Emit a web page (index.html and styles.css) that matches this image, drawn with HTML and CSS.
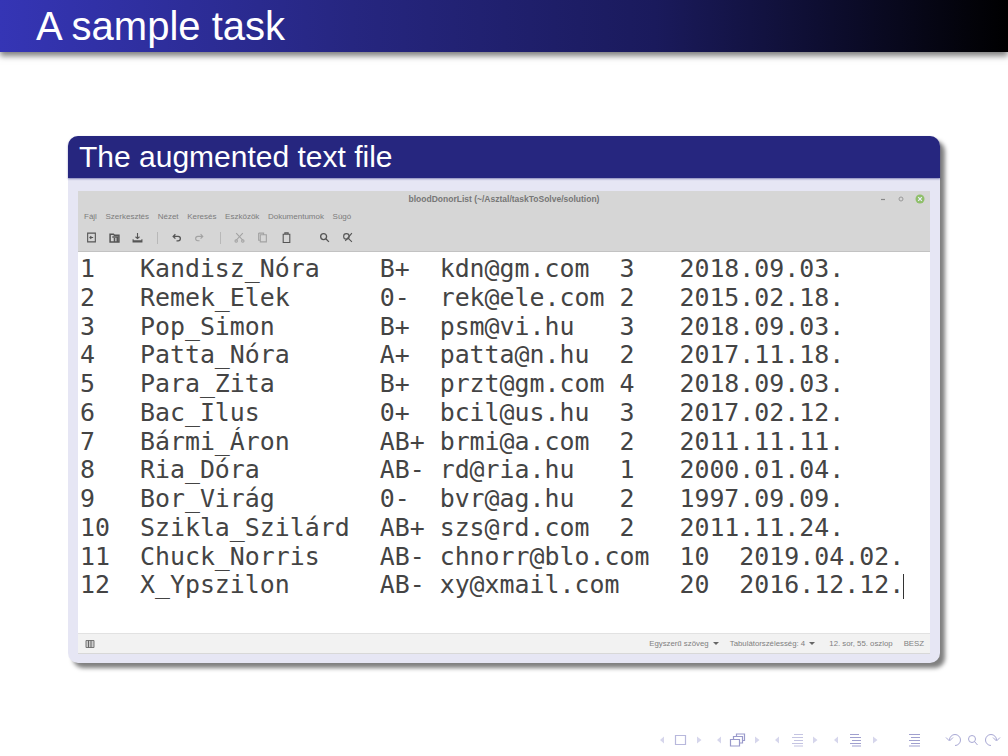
FILE: index.html
```html
<!DOCTYPE html>
<html lang="en">
<head>
    <meta charset="UTF-8">
    <title>A sample task</title>
    <link rel="stylesheet" href="styles.css">
</head>
<body>
    <div class="slide">
        <header class="frame-title">A sample task</header>

        <section class="block">
            <h2 class="block-title">The augmented text file</h2>
            <div class="block-body">
                <div class="window">
                    <div class="titlebar">
                        <span class="window-name">bloodDonorList (~/Asztal/taskToSolve/solution)</span>
                        <span class="window-btns">
                            <svg width="8" height="8" viewBox="0 0 8 8"><path d="M2 4.5h4" stroke="#888" stroke-width="1.2"/></svg>
                            <svg width="8" height="8" viewBox="0 0 8 8"><circle cx="4" cy="4" r="2" fill="none" stroke="#999" stroke-width="1"/></svg>
                            <svg width="10" height="10" viewBox="0 0 10 10"><circle cx="5" cy="5" r="4.5" fill="#8fbf6a"/><path d="M3.2 3.2l3.6 3.6M6.8 3.2l-3.6 3.6" stroke="#eef" stroke-width="1.2"/></svg>
                        </span>
                    </div>
                    <nav class="menubar">
                        <span>Fájl</span><span>Szerkesztés</span><span>Nézet</span><span>Keresés</span><span>Eszközök</span><span>Dokumentumok</span><span>Súgó</span>
                    </nav>
                    <div class="toolbar">
                        <svg class="tool" viewBox="0 0 10 10"><path d="M1.5 1h7v8h-7zM6.5 5H3.5M4.8 3.7L3.5 5l1.3 1.3"/></svg>
                        <svg class="tool tool-open" viewBox="0 0 10 10"><path d="M1 9V2h3l1 1h4v6zM3 4.5h4.5V9M5 5.5V9"/></svg>
                        <svg class="tool tool-save" viewBox="0 0 10 10"><path d="M5 1v5M3.2 4.3L5 6l1.8-1.7M1 6.5v2.5h8V6.5M1 8h8"/></svg>
                        <i class="tool-sep"></i>
                        <svg class="tool tool-undo" viewBox="0 0 10 10"><path d="M2 4h4.5a2 2 0 0 1 0 4H5M4 2L2 4l2 2"/></svg>
                        <svg class="tool tool-redo" viewBox="0 0 10 10"><path d="M8 4H3.500a2 2 0 0 0 0 4H5M6 2l2 2-2 2"/></svg>
                        <i class="tool-sep tool-sep-2"></i>
                        <svg class="tool tool-cut" viewBox="0 0 10 10"><path d="M2 1l6 6.5M8 1L2 7.5"/><circle cx="2" cy="8.2" r="1.1"/><circle cx="8" cy="8.2" r="1.1"/></svg>
                        <svg class="tool tool-copy" viewBox="0 0 10 10"><path d="M1.5 1h4.5v1.5M3 2.5h5.5V9H3zM1.5 1v6.5H3"/></svg>
                        <svg class="tool tool-paste" viewBox="0 0 10 10"><path d="M2 2h6v7.500H2zM3.500 2V.8h3V2"/></svg>
                        <svg class="tool tool-find" viewBox="0 0 10 10"><circle cx="4.200" cy="4.200" r="2.700"/><path d="M6.200 6.200L9 9"/></svg>
                        <svg class="tool tool-clear" viewBox="0 0 10 10"><circle cx="4" cy="4" r="2.500"/><path d="M5.800 5.800L9 9M9 1L3 8"/></svg>
                    </div>
                    <pre class="editor">1   Kandisz_Nóra    B+  kdn@gm.com  3   2018.09.03.
2   Remek_Elek      0-  rek@ele.com 2   2015.02.18.
3   Pop_Simon       B+  psm@vi.hu   3   2018.09.03.
4   Patta_Nóra      A+  patta@n.hu  2   2017.11.18.
5   Para_Zita       B+  przt@gm.com 4   2018.09.03.
6   Bac_Ilus        0+  bcil@us.hu  3   2017.02.12.
7   Bármi_Áron      AB+ brmi@a.com  2   2011.11.11.
8   Ria_Dóra        AB- rd@ria.hu   1   2000.01.04.
9   Bor_Virág       0-  bvr@ag.hu   2   1997.09.09.
10  Szikla_Szilárd  AB+ szs@rd.com  2   2011.11.24.
11  Chuck_Norris    AB- chnorr@blo.com  10  2019.04.02.
12  X_Ypszilon      AB- xy@xmail.com    20  2016.12.12.<span class="caret"></span></pre>
                    <div class="statusbar">
                        <svg class="panel-toggle" width="10" height="8" viewBox="0 0 10 8"><path d="M1 .5h8v7H1z" fill="#ccc" stroke="#777"/><path d="M3.500 .5v7M6 .5v7" stroke="#666"/></svg>
                        <span class="status-items">
                            <span>Egyszerű szöveg <b class="drop"></b></span>
                            <span>Tabulátorszélesség: 4 <b class="drop"></b></span>
                            <span>12. sor, 55. oszlop</span>
                            <span>BESZ</span>
                        </span>
                    </div>
                </div>
            </div>
        </section>

        <footer class="beamer-nav">
            <svg width="348" height="20" viewBox="0 0 348 20">
                <g class="nav-tri">
                    <path d="M4 6.500v7L0 10zM37 6.500v7l4.500-3.500zM61 6.500v7L57 10zM95 6.500v7l4.500-3.500zM119 6.500v7L115 10zM153 6.500v7l4.500-3.500zM178 6.500v7L174 10zM213 6.500v7l4.500-3.500z"/>
                </g>
                <g class="nav-line">
                    <path d="M15.500 5.500h10v9h-10z"/>
                    <path d="M70.500 9.500h9v6.500h-9zM73.500 9.500V6.500h9v6.500h-3M76.500 6.500V4h8v6.500h-2"/>
                </g>
                <g class="nav-list">
                    <path d="M134 4.500h9M132 7.500h11M134 10.500h9M132 13.500h11M134 16h9"/>
                    <path class="nav-dark" d="M190 4.500h9M190 7.500h11M192 10.500h9M190 13.500h11M192 16h9"/>
                    <path class="nav-dark" d="M249 4.500h11M251 7.500h9M249 10.500h11M251 13.500h9M249 16h11"/>
                </g>
                <g class="nav-loop">
                    <path d="M289.500 10a5.500 5.500 0 1 1 5.500 5.500M286 7.500l3.500 3.500 3.500-3.500"/>
                    <circle cx="312" cy="9" r="3.500"/>
                    <path d="M314.500 11.500l3 3.500"/>
                    <path d="M336.500 10a5.500 5.500 0 1 0-5.500 5.500M333 7.500l3.500 3.500 3.500-3.500"/>
                </g>
            </svg>
        </footer>
    </div>
</body>
</html>
```

FILE: styles.css
```css
html, body {
    margin: 0;
    padding: 0;
}

body {
    font-family: 'Liberation Sans', Arial, sans-serif;
    background-color: #ffffff;
}

.slide {
    width: 1008px;
    height: 756px;
    overflow: hidden;
    display: flex;
    flex-direction: column;
}

.frame-title {
    height: 52px;
    flex-shrink: 0;
    box-sizing: border-box;
    padding-left: 36px;
    line-height: 52px;
    font-size: 40px;
    color: #ffffff;
    background: linear-gradient(to right, #3535b5 0%, #262680 35%, #1a1a5c 65%, #000000 100%);
    box-shadow: 0 4px 6px rgba(0, 0, 0, 0.5);
}

.block {
    width: 872px;
    margin: 84px 0 0 68px;
    border-radius: 10px;
    box-shadow: 5px 5px 4px rgba(0, 0, 0, 0.5);
    background-color: #e6e6f4;
}

.block-title {
    margin: 0;
    height: 42px;
    box-sizing: border-box;
    padding-left: 11px;
    font-size: 30px;
    font-weight: 400;
    line-height: 42px;
    color: #ffffff;
    background-color: #26267f;
    border-radius: 10px 10px 0 0;
    box-shadow: 0 1px 2px rgba(38, 38, 127, 0.5);
}

.block-body {
    padding: 13px 10px 9px;
    border-radius: 0 0 10px 10px;
}

.window {
    background-color: #ffffff;
    display: flex;
    flex-direction: column;
}

.titlebar {
    height: 18px;
    background-color: #d6d6d6;
    position: relative;
    text-align: center;
}

.window-name {
    font-size: 8.5px;
    font-weight: 700;
    line-height: 16px;
    color: #777777;
    display: block;
}

.window-btns {
    position: absolute;
    right: 5px;
    top: 3px;
    display: flex;
    align-items: center;
    gap: 10px;
}

.menubar {
    height: 15px;
    padding-left: 6px;
    display: flex;
    gap: 8.6px;
    align-items: center;
    background-color: #d6d6d6;
    font-size: 8px;
    color: #7c7c7c;
}

.toolbar {
    height: 28px;
    display: flex;
    align-items: center;
    padding-left: 8px;
    background-color: #d6d6d6;
    border-bottom: 1px solid #c2c2c2;
    box-sizing: border-box;
}

.tool {
    width: 11px;
    height: 11px;
    margin-right: 12px;
    fill: none;
    stroke: #555555;
    stroke-width: 1;
}

.tool-open {
    stroke-width: 1.4;
}

.tool-undo,
.tool-find {
    stroke-width: 1.2;
}

.tool-redo,
.tool-cut,
.tool-copy {
    stroke: #a2a2a2;
}

.tool-save {
    margin-right: 14px;
}

.tool-sep {
    width: 1px;
    height: 12px;
    background-color: #b8b8b8;
    margin-right: 13px;
}

.tool-redo {
    margin-right: 15px;
}

.tool-sep-2 {
    margin-right: 13px;
}

.tool-copy {
    margin-right: 13px;
}

.tool-paste {
    margin-right: 27px;
}

.editor {
    margin: 0;
    height: 381px;
    box-sizing: border-box;
    padding: 3px 0 0 2px;
    font-family: 'DejaVu Sans Mono', 'Liberation Mono', monospace;
    font-size: 24.9px;
    line-height: 28.75px;
    color: #444444;
    background-color: #ffffff;
}

.caret {
    display: inline-block;
    width: 1px;
    height: 25px;
    margin-left: -1px;
    vertical-align: -6px;
    background-color: #333333;
}

.statusbar {
    height: 21px;
    box-sizing: border-box;
    padding: 0 6px 0 7px;
    display: flex;
    justify-content: space-between;
    align-items: center;
    background-color: #f2f2f2;
    border-top: 1px solid #e2e2e2;
    border-bottom: 1px solid #d8d8d8;
    font-size: 7.8px;
    color: #808080;
}

.status-items {
    display: flex;
    gap: 11px;
}

.status-items span:nth-child(3) {
    margin-left: 3px;
}

.drop {
    display: inline-block;
    margin-left: 2px;
    vertical-align: 1px;
    border-left: 3px solid transparent;
    border-right: 3px solid transparent;
    border-top: 3px solid #666666;
}

.beamer-nav {
    margin: 67px 0 0 660px;
    height: 20px;
    line-height: 0;
}

.nav-tri {
    fill: #d6d6ec;
}

.nav-line,
.nav-list,
.nav-loop {
    fill: none;
    stroke: #c4c4e2;
    stroke-width: 1;
}

.nav-line path:first-child {
    stroke: #b8b8dc;
    stroke-width: 1.2;
}

.nav-line path:last-child {
    stroke: #9a9acb;
    stroke-width: 1.2;
}

.nav-dark {
    stroke: #a0a0cf;
    stroke-width: 1.2;
}

.nav-loop {
    stroke: #a8a8d4;
}
```
